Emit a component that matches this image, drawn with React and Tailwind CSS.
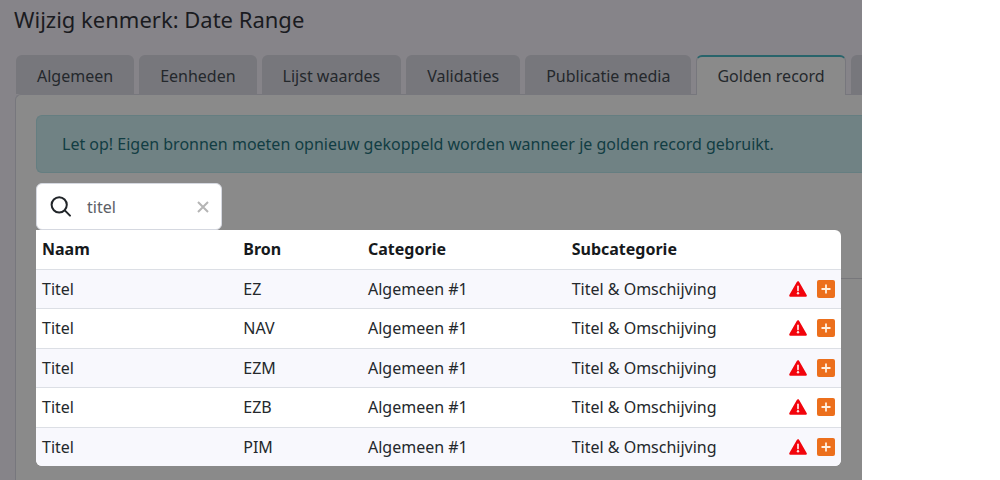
import { useState } from "react";

const tabs = [
  { id: "algemeen", label: "Algemeen" },
  { id: "eenheden", label: "Eenheden" },
  { id: "waardes", label: "Lijst waardes" },
  { id: "validaties", label: "Validaties" },
  { id: "media", label: "Publicatie media" },
  { id: "golden", label: "Golden record" },
  { id: "extra", label: "" },
];

const rows = [
  { id: 1, naam: "Titel", bron: "EZ" },
  { id: 2, naam: "Titel", bron: "NAV" },
  { id: 3, naam: "Titel", bron: "EZM" },
  { id: 4, naam: "Titel", bron: "EZB" },
  { id: 5, naam: "Titel", bron: "PIM" },
];

function WarningIcon() {
  return (
    <svg className="h-4 w-[18px]" viewBox="0 0 18 16" role="img" aria-label="Waarschuwing">
      <path d="M9 1.4 16.6 14.6H1.4Z" fill="#f2040c" stroke="#f2040c" strokeWidth="2.4" strokeLinejoin="round" />
      <path d="M9 5.4V9.4" stroke="#ffdede" strokeWidth="1.8" strokeLinecap="round" />
      <circle cx="9" cy="12.3" r="1.2" fill="#ffdede" />
    </svg>
  );
}

function Tabs({ active, onChange }) {
  return (
    <div role="tablist" className="flex gap-[5px] pl-4">
      {tabs.map((tab) => (
        <button
          key={tab.id}
          type="button"
          role="tab"
          aria-selected={tab.id === active}
          onClick={() => onChange(tab.id)}
          className={
            tab.id === active
              ? "relative z-10 -mb-px h-10 shrink-0 rounded-t-md border border-b-0 border-[#77777d] border-t-2 border-t-[#28646b] bg-[#8a8a8a] px-5 whitespace-nowrap"
              : "h-[39px] min-w-24 shrink-0 rounded-t-md bg-[#77777c] px-[21px] pt-0.5 whitespace-nowrap"
          }
        >
          {tab.label}
        </button>
      ))}
    </div>
  );
}

function SearchBox({ value, onChange }) {
  return (
    <div className="flex h-[47px] w-[186px] items-center rounded-md border border-[#d5d8e0] bg-white px-3">
      <svg className="h-6 w-6 shrink-0" viewBox="0 0 24 24" fill="none" stroke="#212529" strokeWidth="2" strokeLinecap="round">
        <circle cx="10.2" cy="9.8" r="7.6" />
        <path d="M15.8 15.4 21 20.6" />
      </svg>
      <input
        type="text"
        aria-label="Zoeken"
        value={value}
        onChange={(e) => onChange(e.target.value)}
        className="ml-3.5 w-full min-w-0 bg-transparent text-[#5c6066] outline-none"
      />
      <button type="button" aria-label="Wissen" onClick={() => onChange("")}>
        <svg className="h-3 w-3" viewBox="0 0 12 12" stroke="#b5b5b5" strokeWidth="2">
          <path d="M1 1 11 11M11 1 1 11" />
        </svg>
      </button>
    </div>
  );
}

function ResultTable() {
  return (
    <div className="absolute top-full right-[21px] left-0 overflow-hidden rounded-md rounded-tl-none bg-white">
      <table className="w-full table-fixed text-left">
        <thead>
          <tr className="h-[39px] text-[#16191c]">
            <th className="w-[25%] pl-1.5 font-bold">Naam</th>
            <th className="w-[15.5%] pl-1.5 font-bold">Bron</th>
            <th className="w-[25.3%] pl-1.5 font-bold">Categorie</th>
            <th className="pl-1.5 font-bold">Subcategorie</th>
            <th className="w-[60px]" aria-label="Acties"></th>
          </tr>
        </thead>
        <tbody>
          {rows.map((row) => (
            <tr key={row.id} className="h-10 border-t border-[#dcdfe5] odd:h-[39px] odd:bg-[#f8f8fd]">
              <td className="pl-1.5">{row.naam}</td>
              <td className="pl-1.5">{row.bron}</td>
              <td className="pl-1.5">Algemeen #1</td>
              <td className="pl-1.5 whitespace-nowrap">Titel &amp; Omschijving</td>
              <td>
                <div className="flex items-center justify-end gap-2.5 pr-1.5">
                  <WarningIcon />
                  <button type="button" aria-label="Toevoegen">
                    <svg className="h-[18px] w-[18px]" viewBox="0 0 18 18">
                      <rect width="18" height="18" rx="2" fill="#ec6f1c" />
                      <path d="M9 4.5V13.5M4.5 9H13.5" stroke="#fff0e0" strokeWidth="1.8" />
                    </svg>
                  </button>
                </div>
              </td>
            </tr>
          ))}
        </tbody>
      </table>
    </div>
  );
}

export default function App() {
  const [active, setActive] = useState("golden");
  const [search, setSearch] = useState("titel");

  return (
    <div className="min-h-screen bg-white font-['Noto_Sans','Open_Sans',sans-serif] text-base text-[#24282c]">
      <div className="flex min-h-screen w-full max-w-[862px] flex-col overflow-hidden bg-[#868489]">
        <h1 className="px-3.5 pt-[3px] pb-5 text-[22px] leading-8 text-[#1a1b1f]">Wijzig kenmerk: Date Range</h1>
        <Tabs active={active} onChange={setActive} />
        <main className="ml-[15px] flex-1 rounded-tl-md border-t border-l border-[#77777d] bg-[#8a8a8a] pt-5 pl-5">
          <div role="alert" className="rounded-l-md border border-r-0 border-[#657e81] bg-[#708284] px-[25px] py-4 leading-6 text-[#123d43]">
            Let op! Eigen bronnen moeten opnieuw gekoppeld worden wanneer je golden record gebruikt.
          </div>
          <div className="relative z-10 mt-2.5">
            <SearchBox value={search} onChange={setSearch} />
            <ResultTable />
          </div>
          <hr className="mt-12 border-[#77777b]" />
        </main>
      </div>
    </div>
  );
}
